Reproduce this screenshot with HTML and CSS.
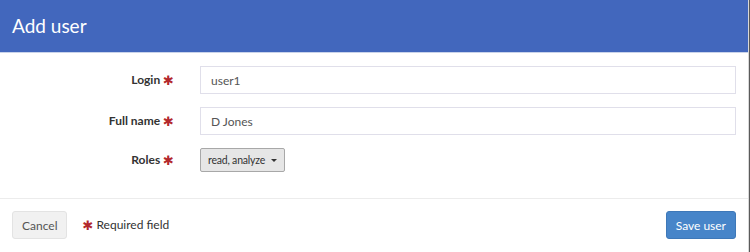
FILE: index.html
```html
<!DOCTYPE html>
<html lang="en">
  <head>
    <meta charset="UTF-8" />
    <title>Add user</title>
    <link rel="stylesheet" href="styles.css">
  </head>
  <body>
    <div class="modal">
      <header class="modal-header">
        <h1>Add user</h1>
      </header>

      <form class="modal-body">
        <div class="row">
          <label for="login">Login <span class="req">&#x2731;</span></label>
          <input type="text" id="login" value="user1" />
        </div>
        <div class="row">
          <label for="fullName">Full name <span class="req">&#x2731;</span></label>
          <input type="text" id="fullName" value="D Jones" />
        </div>
        <div class="row">
          <label>Roles <span class="req">&#x2731;</span></label>
          <div>
            <button type="button" class="dropdown">read, analyze <span class="caret"></span></button>
          </div>
        </div>
      </form>

      <footer class="modal-footer">
        <button type="button" class="btn-default">Cancel</button>
        <span class="legend"><span class="req">&#x2731;</span> Required field</span>
        <button type="button" class="btn-primary">Save user</button>
      </footer>
    </div>
  </body>
</html>
```

FILE: styles.css
```css
body {
  margin: 0;
  background-color: #5a5a5a;
  font-family: Lato, "Open Sans", sans-serif;
  color: #333;
}

.modal {
  width: 748px;
  height: 252px;
  background: white;
  border-right: 1px solid #d8d8d8;
}

.modal-header {
  height: 52px;
  padding: 0 12px;
  display: flex;
  align-items: center;
  background-color: #4267bd;
  border-bottom: 1px solid #c9d3ea;
}

.modal-header h1 {
  margin: 0;
  font-size: 19px;
  font-weight: normal;
  color: white;
  padding-bottom: 2px;
}

.modal-body {
  padding: 13px 12px 13px 0;
  display: flex;
  flex-direction: column;
  gap: 13px;
  height: 119px;
}

.row {
  display: grid;
  grid-template-columns: 174px 1fr;
  gap: 26px;
  align-items: center;
}

label {
  text-align: right;
  font-size: 12px;
  font-weight: bold;
  color: #333;
}

.req {
  color: #b3282d;
  font-family: "DejaVu Sans", sans-serif;
  font-size: 13px;
  font-weight: bold;
  vertical-align: -1px;
}

input {
  height: 28px;
  box-sizing: border-box;
  border: 1px solid #e0dfea;
  padding: 0 10px;
  font-family: inherit;
  font-size: 12px;
  color: #555;
  outline: none;
}

.dropdown {
  height: 24px;
  padding: 0 7px;
  background-color: #e6e6e6;
  border: 1px solid #a8a8a8;
  border-radius: 2px;
  font-family: inherit;
  font-size: 10.5px;
  color: #333;
  display: flex;
  align-items: center;
  gap: 6px;
  letter-spacing: -0.2px;
}

.caret {
  width: 0;
  height: 0;
  border-left: 3px solid transparent;
  border-right: 3px solid transparent;
  border-top: 3px solid #333;
}

.modal-footer {
  border-top: 1px solid #ececec;
  padding: 12px 12px 13px 12px;
  display: flex;
  align-items: center;
}

.modal-footer button {
  height: 28px;
  padding: 0 9px;
  border-radius: 3px;
  font-family: inherit;
  font-size: 12px;
}

.btn-default {
  background-color: #f1f1f1;
  border: 1px solid #e3e3e3;
  color: #555;
}

.legend {
  margin-left: 15px;
  font-size: 12px;
  color: #333;
}

.btn-primary {
  margin-left: auto;
  background-color: #4785c9;
  border: 1px solid #3e78b8;
  color: white;
}
```
